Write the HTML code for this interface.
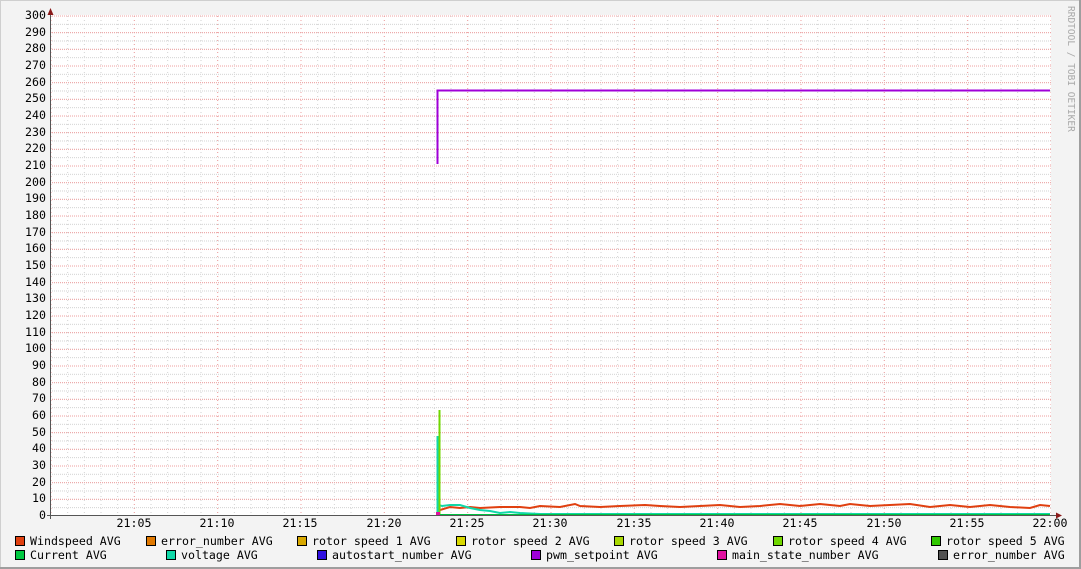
<!DOCTYPE html>
<html><head><meta charset="utf-8"><style>
html,body{margin:0;padding:0;background:#f3f3f3;}
svg{display:block;}
text{font-family:"DejaVu Sans Mono","Liberation Mono",monospace;font-size:11.6px;fill:#000;}
</style></head><body>
<svg width="1081" height="569" viewBox="0 0 1081 569" xmlns="http://www.w3.org/2000/svg">
<defs>
<pattern id="mv" x="50.5" y="0" width="16.667" height="4" patternUnits="userSpaceOnUse">
<rect x="0" y="0" width="1" height="1" fill="#d2d2d2"/></pattern>
<pattern id="mh" x="0" y="15.5" width="2" height="8.333" patternUnits="userSpaceOnUse">
<rect x="0" y="0" width="1" height="1" fill="#d2d2d2"/></pattern>
<pattern id="Mv" x="50.5" y="0" width="83.33" height="4" patternUnits="userSpaceOnUse">
<rect x="0" y="0" width="1" height="1" fill="#f0a0a0"/></pattern>
<pattern id="Mh" x="0" y="15.5" width="2" height="16.667" patternUnits="userSpaceOnUse">
<rect x="0" y="0" width="1" height="1" fill="#f0a0a0"/></pattern>
</defs>
<rect x="0" y="0" width="1081" height="569" fill="#f3f3f3"/>
<rect x="0.5" y="0.5" width="1079" height="567" fill="none" stroke="#cfcfcf"/>
<line x1="1080" y1="0" x2="1080" y2="569" stroke="#9e9e9e" stroke-width="2"/>
<line x1="0" y1="568" x2="1081" y2="568" stroke="#9e9e9e" stroke-width="2"/>
<rect x="51" y="15" width="1000" height="500" fill="#fff"/>
<rect x="51" y="15" width="1000" height="500" fill="url(#mv)"/>
<rect x="51" y="15" width="1000" height="500" fill="url(#mh)"/>
<rect x="51" y="15" width="1000" height="500" fill="url(#Mv)"/>
<rect x="51" y="15" width="1000" height="500" fill="url(#Mh)"/>
<!-- data -->
<polyline points="437.5,164 437.5,90.5 1050,90.5" fill="none" stroke="#a000d8" stroke-width="2"/>
<polyline points="440,510 450,507 460,508 470,507 480,508 500,507 520,507 530,508 540,506 560,507 575,504 580,506 600,507 620,506 645,505 660,506 680,507 700,506 720,505 740,507 760,506 780,504 800,506 820,504 840,506 850,504 870,506 890,505 910,504 930,507 950,505 970,507 990,505 1010,507 1030,508 1040,505 1050,506" fill="none" stroke="#e04010" stroke-width="2"/>
<polyline points="437.5,515 437.5,437 438.5,437 438.5,505 442,506 450,505 460,505 470,508 480,510 490,511 500,513 510,512 520,513 540,514 600,514 1050,514" fill="none" stroke="#10d8a8" stroke-width="2"/>
<line x1="439.5" y1="515" x2="439.5" y2="410" stroke="#70d800" stroke-width="2"/>
<line x1="438" y1="514.5" x2="1050" y2="514.5" stroke="#00c040" stroke-width="1"/>
<rect x="436" y="512" width="4" height="3" fill="#e010a0"/>
<!-- axes -->
<line x1="50.5" y1="10" x2="50.5" y2="519" stroke="#555"/>
<line x1="47" y1="515.5" x2="1058" y2="515.5" stroke="#555"/>
<polygon points="47.5,15 53.5,15 50.5,8" fill="#8b1a1a"/>
<polygon points="1056,512.5 1056,518.5 1062,515.5" fill="#8b1a1a"/>
<g text-anchor="end">
<text x="46" y="19">300</text><text x="46" y="36">290</text><text x="46" y="52">280</text><text x="46" y="69">270</text><text x="46" y="86">260</text><text x="46" y="102">250</text><text x="46" y="119">240</text><text x="46" y="136">230</text><text x="46" y="152">220</text><text x="46" y="169">210</text><text x="46" y="186">200</text><text x="46" y="202">190</text><text x="46" y="219">180</text><text x="46" y="236">170</text><text x="46" y="252">160</text><text x="46" y="269">150</text><text x="46" y="286">140</text><text x="46" y="302">130</text><text x="46" y="319">120</text><text x="46" y="336">110</text><text x="46" y="352">100</text><text x="46" y="369">90</text><text x="46" y="386">80</text><text x="46" y="402">70</text><text x="46" y="419">60</text><text x="46" y="436">50</text><text x="46" y="452">40</text><text x="46" y="469">30</text><text x="46" y="486">20</text><text x="46" y="502">10</text><text x="46" y="519">0</text>
</g>
<g text-anchor="middle">
<text x="134" y="527">21:05</text><text x="217" y="527">21:10</text><text x="300" y="527">21:15</text><text x="384" y="527">21:20</text><text x="467" y="527">21:25</text><text x="550" y="527">21:30</text><text x="634" y="527">21:35</text><text x="717" y="527">21:40</text><text x="800" y="527">21:45</text><text x="884" y="527">21:50</text><text x="967" y="527">21:55</text><text x="1050" y="527">22:00</text>
</g>
<text x="1068" y="6" transform="rotate(90 1068 6)" style="font-size:9.5px;fill:#aaa" x-dummy="">RRDTOOL / TOBI OETIKER</text>
<!-- legend -->
<g stroke="#000" stroke-width="1">
<rect x="15.5" y="536.5" width="9" height="9" fill="#e04010"/>
<rect x="146.5" y="536.5" width="9" height="9" fill="#e07800"/>
<rect x="297.5" y="536.5" width="9" height="9" fill="#d8a800"/>
<rect x="456.5" y="536.5" width="9" height="9" fill="#d8d800"/>
<rect x="614.5" y="536.5" width="9" height="9" fill="#a8d800"/>
<rect x="773.5" y="536.5" width="9" height="9" fill="#70d800"/>
<rect x="931.5" y="536.5" width="9" height="9" fill="#30c800"/>
<rect x="15.5" y="550.5" width="9" height="9" fill="#00c840"/>
<rect x="166.5" y="550.5" width="9" height="9" fill="#10d8a8"/>
<rect x="317.5" y="550.5" width="9" height="9" fill="#3010e0"/>
<rect x="531.5" y="550.5" width="9" height="9" fill="#a000d8"/>
<rect x="717.5" y="550.5" width="9" height="9" fill="#e010a0"/>
<rect x="938.5" y="550.5" width="9" height="9" fill="#505050"/>
</g>
<text x="30" y="545">Windspeed AVG</text>
<text x="161" y="545">error_number AVG</text>
<text x="312" y="545">rotor speed 1 AVG</text>
<text x="471" y="545">rotor speed 2 AVG</text>
<text x="629" y="545">rotor speed 3 AVG</text>
<text x="788" y="545">rotor speed 4 AVG</text>
<text x="946" y="545">rotor speed 5 AVG</text>
<text x="30" y="559">Current AVG</text>
<text x="181" y="559">voltage AVG</text>
<text x="332" y="559">autostart_number AVG</text>
<text x="546" y="559">pwm_setpoint AVG</text>
<text x="732" y="559">main_state_number AVG</text>
<text x="953" y="559">error_number AVG</text>
</svg>
</body></html>
